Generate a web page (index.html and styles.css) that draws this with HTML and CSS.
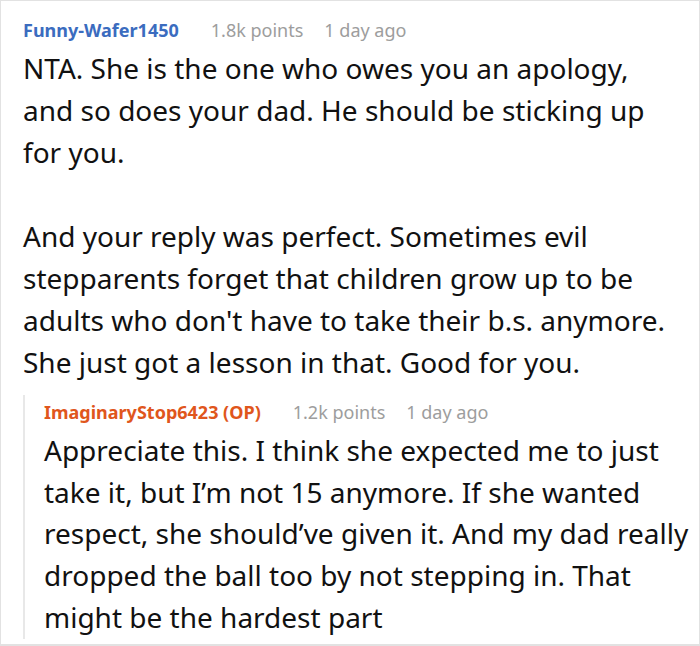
FILE: index.html
```html
<!DOCTYPE html>
<html>
<head>
<meta charset="utf-8">
<link rel="stylesheet" href="styles.css">
</head>
<body>
<div class="thread">
  <div class="comment">
    <div class="meta">
      <span class="user">Funny-Wafer1450</span>
      <span class="info">1.8k points</span>
      <span class="info">1 day ago</span>
    </div>
    <div class="body main-body">
      <p>NTA. She is the one who owes you an apology, and so does your dad. He should be sticking up for you.</p>
      <p>And your reply was perfect. Sometimes evil stepparents forget that children grow up to be adults who don't have to take their b.s. anymore. She just got a lesson in that. Good for you.</p>
    </div>
    <div class="reply">
      <div class="meta">
        <span class="user op">ImaginaryStop6423 (OP)</span>
        <span class="info">1.2k points</span>
        <span class="info">1 day ago</span>
      </div>
      <div class="body reply-body">
        <p>Appreciate this. I think she expected me to just take it, but I’m not 15 anymore. If she wanted respect, she should’ve given it. And my dad really dropped the ball too by not stepping in. That might be the hardest part</p>
      </div>
    </div>
  </div>
</div>
</body>
</html>
```

FILE: styles.css
```css
html, body {
  margin: 0;
  padding: 0;
  background: #fff;
}
.thread {
  width: 700px;
  height: 646px;
  box-sizing: border-box;
  border: 1px solid #e2e2e2;
  border-bottom-width: 2px;
  font-family: "Noto Sans", sans-serif;
  color: #111;
  overflow: hidden;
}
.comment {
  padding: 17px 0 0 22px;
}
.meta {
  display: flex;
  gap: 21px;
  font-size: 18px;
  line-height: 24px;
}
.user {
  font-weight: 700;
  color: #3b6cbf;
  margin-right: 11px;
}
.user.op {
  color: #e0561c;
}
.info {
  color: #9d9d9d;
}
.body {
  margin-top: 5px;
  font-size: 28px;
  line-height: 42px;
}
.main-body {
  padding-right: 24px;
}
.body p {
  margin: 0 0 42px 0;
}
.body p:last-child {
  margin-bottom: 0;
}
.reply {
  margin-top: 12px;
  border-left: 2px solid #e8e8e8;
  padding-left: 19px;
  padding-top: 5px;
}
.reply-body {
  margin-top: 6px;
  line-height: 41.7px;
}
```
